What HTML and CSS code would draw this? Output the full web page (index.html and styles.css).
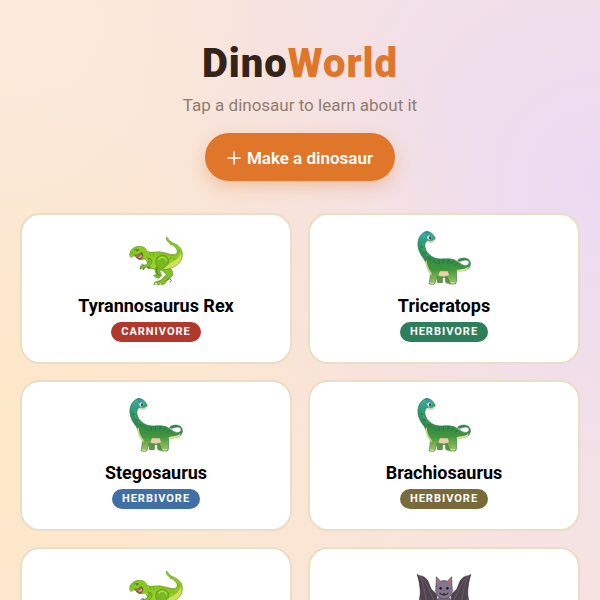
FILE: index.html
```html
<!DOCTYPE html>
<html lang="en">
<head>
<meta charset="utf-8">
<meta name="viewport" content="width=device-width, initial-scale=1">
<title>DinoWorld</title>
<link rel="stylesheet" href="styles.css">
</head>
<body>
<svg class="sprites" width="0" height="0" aria-hidden="true">
  <defs>
    <linearGradient id="neck" x1="0" y1="0" x2="0" y2="1">
      <stop offset="0" stop-color="#38b3a4"/>
      <stop offset="0.22" stop-color="#2c9a76"/>
      <stop offset="0.5" stop-color="#2d8a4c"/>
      <stop offset="0.72" stop-color="#43963d"/>
      <stop offset="1" stop-color="#a5c766"/>
    </linearGradient>
    <linearGradient id="rexskin" x1="0" y1="0" x2="0" y2="1">
      <stop offset="0" stop-color="#8ecb2a"/>
      <stop offset="0.5" stop-color="#86c91f"/>
      <stop offset="1" stop-color="#a6d62c"/>
    </linearGradient>
  </defs>
  <symbol id="rex" viewBox="26 10 162 162">
    <g stroke-linejoin="round" stroke-linecap="round">
      <path d="M145 116C152 124 159 133 157 141C154 149 144 153 139 159L133 168L126 171L101 171L103 164L112 161L122 158C127 150 135 146 139 140L125 128Z" fill="#7fc022" stroke="#56861a" stroke-width="2"/>
      <path d="M101 171l3-6 7 0 2 6zM115 171l3-5 6 1 0 4z" fill="#e6f0cf" stroke="#4d7a31" stroke-width="1"/>
      <path d="M139 158l9-5 5 5-3 5" fill="none" stroke="#56861a" stroke-width="3"/>
      <path d="M93 104L91 115L81 119L85 124L92 121L99 123L102 110Z" fill="#579a22" stroke="#417b20" stroke-width="2"/>
      <path d="M28 82C28 67 39 58 54 56C68 55 77 61 80 71C90 77 106 71 121 73C138 75 158 85 167 79C176 72 168 59 155 51C144 45 136 37 138 29C140 27 143 31 144 35C148 43 158 45 169 51C182 59 187 70 186 82C185 98 176 109 164 116C149 124 119 131 102 125C90 121 81 112 79 99L74 94L65 96C56 97 48 88 44 83L32 89Z" fill="url(#rexskin)" stroke="#669b24" stroke-width="2"/>
      <path d="M150 107C164 101 178 91 182 74C187 93 176 110 159 117C149 121 139 123 130 124Z" fill="#d6de62"/>
      <path d="M111 76C131 73 149 84 161 84C171 82 173 76 172 70" fill="none" stroke="#b88b3d" stroke-width="2"/>
      <path d="M44 82C52 84 58 78 64 74L68 83C68 91 62 97 56 95C48 92 45 87 44 82Z" fill="#8a4c35" stroke="#6d6530" stroke-width="2"/>
      <path d="M49 87C56 88 60 84 65 80L66 88L58 92Z" fill="#d99c83"/>
      <path d="M47 83l2 4 3-5 3 3 2-5 4 1" fill="none" stroke="#d8cda0" stroke-width="1"/>
      <path d="M41 68C46 63 53 65 56 68" fill="none" stroke="#4f831d" stroke-width="3"/>
      <circle cx="50" cy="69" r="2" fill="#2e4c13"/>
      <circle cx="35" cy="75" r="1.5" fill="#54821e"/>
      <path d="M84 91C91 99 82 109 75 112L66 113L61 118L60 125L66 120L69 126L74 119L83 117C93 111 96 105 94 97Z" fill="#86c32a" stroke="#4d7c22" stroke-width="2"/>
      <path d="M60 119l1-5 6-5 2 4M69 125l3-6" fill="none" stroke="#3f6b38" stroke-width="2"/>
      <path d="M111 89C123 77 143 83 145 98C147 112 129 119 121 127C115 132 124 137 123 144L116 152L106 150L100 143L109 141C103 131 104 121 110 115C104 107 105 96 111 89Z" fill="#78b922" stroke="#5a8e20" stroke-width="2"/>
      <path d="M116 94C123 85 136 89 138 98" fill="none" stroke="#b2dc44" stroke-width="4"/>
      <path d="M111 120C106 130 111 138 115 144" fill="none" stroke="#417b20" stroke-width="3"/>
      <path d="M103 146l-2 5 6-1 2 3 5-2" fill="none" stroke="#dce9c5" stroke-width="2"/>
      <path d="M88 76l3 8M98 75l2 8M151 89l-2 5M160 90l1 5M178 69l-5 3M154 47l-4 4" stroke="#5e9d20" stroke-width="2"/>
    </g>
  </symbol>
  <symbol id="bronto" viewBox="26 19 162 162">
    <g stroke-linejoin="round" stroke-linecap="round">
      <path d="M110 150L112 172L117 176L128 175L126 154ZM86 154L88 174L102 174L103 151Z" fill="#5c963f" stroke="#507b3c" stroke-width="2"/>
      <path d="M79 43C75 49 68 49 62 47C53 47 48 57 50 68C53 83 65 95 82 101C98 106 118 98 137 105C149 110 158 120 169 123C179 123 185 117 181 110C176 103 166 107 154 110C149 111 147 106 151 104C164 98 178 99 184 109C190 121 183 134 168 137C158 140 150 137 145 142L145 170L141 178L124 178L122 168L116 156C106 160 93 159 86 156L81 173L77 179L62 178L64 169L67 143C57 128 53 114 47 103C34 87 25 67 30 47C33 34 43 21 58 21C69 22 74 29 76 34C80 36 81 40 79 43Z" fill="url(#neck)" stroke="#387b4c" stroke-width="2"/>
      <path d="M48 51C43 71 51 87 67 98C58 98 45 87 42 70C40 58 42 51 48 51Z" fill="#61ae5c" opacity=".4"/>
      <path d="M55 106C56 124 63 136 70 145L70 153C60 146 55 133 50 113Z" fill="#c9d58a"/>
      <path d="M145 137C157 132 170 136 181 125C179 138 166 141 146 143Z" fill="#dae19b"/>
      <path d="M95 140L118 140L122 151C111 157 100 156 90 152Z" fill="#ebcfac"/>
      <path d="M61 49C66 51 74 49 78 43C79 53 69 56 61 52Z" fill="#e8dda9" stroke="#8f986a" stroke-width="1"/>
      <ellipse cx="63" cy="38" rx="6" ry="7" fill="#eef5ef"/>
      <ellipse cx="65" cy="39" rx="3" ry="5" fill="#233b48"/>
      <path d="M56 33C59 29 65 30 68 33" fill="none" stroke="#176e73" stroke-width="2"/>
      <path d="M45 25C50 18 59 19 65 24C58 29 53 26 45 25Z" fill="#278c9b"/>
      <path d="M76 109l8 7M91 107l2 10M106 105l-2 11M121 105l-3 10M135 109l-6 8M147 116l-6 6M60 98l5 5M46 84l5 2M37 67l6 0" stroke="#256f37" stroke-width="3"/>
      <path d="M65 174l4 2 6 0M128 174l6 1 5-1" fill="none" stroke="#e0e3b4" stroke-width="3"/>
    </g>
  </symbol>
  <symbol id="bat" viewBox="22 16 162 162">
    <g stroke-linejoin="round" stroke-linecap="round">
      <path d="M23 45L29 48C41 49 51 55 56 67L64 88L76 99L82 108L80 140C67 128 56 128 50 139C46 123 38 117 29 120C35 102 31 72 23 45Z" fill="#50454f" stroke="#362d39" stroke-width="2"/>
      <path d="M183 45L177 48C165 49 155 55 150 67L142 88L130 99L124 108L126 140C139 128 150 128 156 139C160 123 168 117 177 120C171 102 175 72 183 45Z" fill="#50454f" stroke="#362d39" stroke-width="2"/>
      <path d="M29 49C42 68 46 96 50 135M33 50C50 67 60 94 78 134M177 49C164 68 160 96 156 135M173 50C156 67 146 94 128 134" fill="none" stroke="#74637a" stroke-width="2"/>
      <ellipse cx="103" cy="137" rx="24" ry="31" fill="#76677d" stroke="#4e4353" stroke-width="2"/>
      <path d="M79 80L80 51L93 65C99 62 107 62 113 65L126 51L127 80C132 104 120 117 103 117C86 117 74 104 79 80Z" fill="#85758d" stroke="#554a5c" stroke-width="2"/>
      <path d="M82 69L82 54L92 67ZM124 69L124 54L114 67Z" fill="#b5765a"/>
      <circle cx="93" cy="86" r="4" fill="#211c27"/>
      <circle cx="113" cy="86" r="4" fill="#211c27"/>
      <path d="M101 91l2 3 2-3z" fill="#463649"/>
      <path d="M88 98C94 102 112 102 118 98C114 111 92 111 88 98Z" fill="#382b39"/>
      <path d="M95 101l2 3 2-3M107 101l2 3 2-3" fill="#fff"/>
      <path d="M90 164l-4 7M112 164l4 7" stroke="#302934" stroke-width="4"/>
    </g>
  </symbol>
</svg>
<header class="hero">
  <h1 class="title">Dino<span class="title-accent">World</span></h1>
  <p class="subtitle">Tap a dinosaur to learn about it</p>
  <button class="make" type="button"><svg class="plus" viewBox="0 0 14 14" aria-hidden="true"><path d="M7 0.5V13.5M0.5 7H13.5" fill="none" stroke="currentColor" stroke-width="1.6"/></svg>Make a dinosaur</button>
</header>
<main class="grid">
  <button class="card" type="button"><svg class="art" aria-hidden="true"><use href="#rex"/></svg><span class="name">Tyrannosaurus Rex</span><span class="badge badge-red">CARNIVORE</span></button>
  <button class="card" type="button"><svg class="art" aria-hidden="true"><use href="#bronto"/></svg><span class="name">Triceratops</span><span class="badge badge-green">HERBIVORE</span></button>
  <button class="card" type="button"><svg class="art" aria-hidden="true"><use href="#bronto"/></svg><span class="name">Stegosaurus</span><span class="badge badge-blue">HERBIVORE</span></button>
  <button class="card" type="button"><svg class="art" aria-hidden="true"><use href="#bronto"/></svg><span class="name">Brachiosaurus</span><span class="badge badge-olive">HERBIVORE</span></button>
  <button class="card" type="button"><svg class="art" aria-hidden="true"><use href="#rex"/></svg></button>
  <button class="card" type="button"><svg class="art" aria-hidden="true"><use href="#bat"/></svg></button>
</main>
</body>
</html>
```
FILE: styles.css
```css
* { box-sizing: border-box; }
html { height: 100%; }
body {
  margin: 0;
  height: 100%;
  overflow: hidden;
  padding: 40px 20px 0;
  font-family: Roboto, sans-serif;
  background:
    radial-gradient(circle at 0% 0%, #fcebda 0%, rgba(252, 235, 218, 0) 30%),
    radial-gradient(circle at 0% 75%, #fee8c7 0%, rgba(254, 232, 199, 0) 75%),
    radial-gradient(circle at 100% 30%, #ecdaf3 0%, rgba(236, 218, 243, 0) 60%),
    #f7e4df;
}
.sprites { display: block; }
.hero { display: flex; flex-direction: column; align-items: center; }
.title { margin: 0; font-size: 40px; line-height: 48px; font-weight: 900; letter-spacing: 1px; color: #33241a; }
.title-accent { color: #df7629; }
.subtitle { margin: 6px 0 17px; font-size: 17px; line-height: 22px; color: #8f7d70; }
.make {
  display: flex;
  align-items: center;
  gap: 6px;
  height: 48px;
  padding: 2px 22px 0;
  border: 0;
  border-radius: 24px;
  background: #df7629;
  color: #fff;
  font: 600 17px/20px Roboto, sans-serif;
  box-shadow: 0 6px 16px rgba(223, 118, 41, 0.3);
}
.plus { width: 14px; height: 14px; }
.grid { display: grid; grid-template-columns: repeat(2, minmax(0, 1fr)); gap: 16px; margin-top: 32px; }
.card {
  display: flex;
  flex-direction: column;
  align-items: center;
  min-height: 151px;
  padding: 16px;
  border: 2px solid #e9dec8;
  border-radius: 20px;
  background: #fff;
  color: #000;
  font-family: inherit;
}
.art { flex: none; width: 54px; height: 54px; }
.name { margin-top: 9px; font-size: 18px; line-height: 24px; font-weight: 700; }
.badge {
  margin-top: 4px;
  padding: 0 10px;
  border-radius: 10px;
  font-size: 11px;
  line-height: 20px;
  font-weight: 700;
  letter-spacing: 1px;
  color: #fff;
}
.badge-red { background: #b0382d; }
.badge-green { background: #2d7e5b; }
.badge-blue { background: #3f6fa4; }
.badge-olive { background: #796a3c; }
```
